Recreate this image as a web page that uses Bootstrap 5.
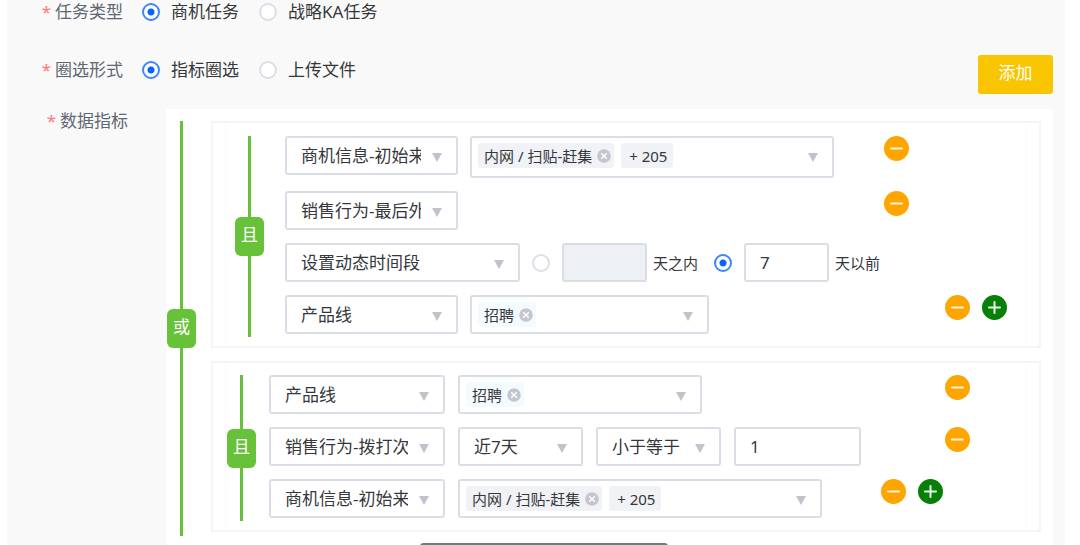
<!DOCTYPE html>
<html lang="zh-CN">
<head>
<meta charset="utf-8">
<meta name="viewport" content="width=device-width, initial-scale=1">
<title>任务圈选</title>
<link href="https://cdn.jsdelivr.net/npm/bootstrap@5.3.0/dist/css/bootstrap.min.css" rel="stylesheet">
<style>
  body { font: 17px/24px "Noto Sans", "Noto Sans CJK SC", sans-serif; color: #35373b; background: #fff; }
  .task-form { margin: 0 15px 0 7px; background: #f9f9f9; min-height: 100vh; }
  .form-line { padding-right: 12px; }
  .mode-line { margin-top: 31px; }
  .mode-line > span, .mode-line > label { padding-top: 3px; }
  .panel-line { margin-top: 15px; }
  .line-label { color: #606772; text-align: right; width: 116px; margin-right: 19px; }
  .line-label::before { content: "*"; color: #f77; margin-right: 4px; }
  .line-label.wide { width: 121px; margin-right: 38px; }
  .choice { gap: 11px; margin-right: 20px; }
  .dot { appearance: none; flex: none; width: 18px; height: 18px; margin: 0; border: 2px solid #dcdfe6; border-radius: 50%; background: #fff; }
  .dot:checked { border-color: #3d86ff; background: radial-gradient(circle, #0a62ff 3px, #fff 4px); }
  .btn-add { width: 75px; height: 39px; padding: 0 0 4px; font-size: 17px; line-height: 24px; color: #fff; background: #f8c500; border: 0; border-radius: 3px; }
  .btn-add:hover { background: #e6b600; color: #fff; }

  .rule-panel { background: #fff; padding: 12px 12px 9px 1px; gap: 15px; }
  .rail { width: 29px; flex: none; background: linear-gradient(#67c23a, #67c23a) center / 3px 100% no-repeat; }
  .rail-badge { width: 29px; height: 39px; line-height: 36px; text-align: center; color: #fff; background: #67c23a; border-radius: 6px; }
  .groups { gap: 13px; }
  .group-box { border: 2px solid #f5f5f5; padding: 0 12px; }
  .group-inner { border: solid #fafafa; border-width: 0 1px; padding: 13px 0 9px 9px; gap: 21px; }
  .group-inner.tight { padding-top: 12px; padding-left: 1px; gap: 13px; }
  .rules { gap: 13px; padding-bottom: 3px; }
  .fields { gap: 12px; }
  .short { width: 599px; }
  .long { width: 660px; }
  .tight .fields { gap: 13px; }
  .tight .short { width: 612px; }
  .tight .long { width: 676px; }

  .field { height: 39px; flex: none; border: 2px solid #dadde5; border-radius: 3px; background-color: #fff; color: inherit; font-size: 17px; line-height: 24px; padding: 0 14px 0 14px; }
  .field:disabled { background-color: #eef1f4; }
  .drop { appearance: none; padding-right: 35px; overflow: hidden; text-overflow: clip;
    background-image: url("data:image/svg+xml,%3Csvg xmlns='http://www.w3.org/2000/svg' viewBox='0 0 10 9'%3E%3Cpath d='M0 0h10L5 9z' fill='%23bfc3cc'/%3E%3C/svg%3E");
    background-repeat: no-repeat; background-position: right 14px top 15px; background-size: 10px 9px; }
  .multi { padding: 5px 34px 0 6px; gap: 7px; }
  .multi.tall { height: 42px; }
  .w-name { width: 173px; }
  .tight .w-name { width: 176px; }
  .w-period { width: 235px; }
  .w-tags { width: 364px; }
  .w-line { width: 239px; }
  .tight .w-line { width: 244px; }
  .w-op { width: 125px; }
  .w-value { width: 127px; }
  .w-days { width: 85px; }
  .note { font-size: 15px; gap: 6px; }
  .chip { height: 25px; padding: 0 3px 0 6px; gap: 5px; font-size: 15px; background: #f0f2f5; border-radius: 3px; }
  .chip.blue { background: #f4fbff; }
  .chip.count { padding: 0 6px 0 8px; }
  .icon-btn { border: 0; padding: 0; background: none; display: flex; }
  .acts { gap: 12px; }
  .scroll-pill { position: fixed; bottom: -5px; left: 50%; width: 248px; height: 7px; margin-left: -120px; border-radius: 5px; background: #77787b; }
</style>
</head>
<body>
<svg class="d-none" xmlns="http://www.w3.org/2000/svg">
  <symbol id="minus" viewBox="0 0 25 25"><circle cx="12.5" cy="12.5" r="12.5" fill="#ffa500"/><path d="M7 12.5h11" stroke="#fff4dd" stroke-width="2.2" stroke-linecap="round"/></symbol>
  <symbol id="plus" viewBox="0 0 25 25"><circle cx="12.5" cy="12.5" r="12.5" fill="#078007"/><path d="M7 12.5h11M12.5 7v11" stroke="#e8f5e8" stroke-width="2" stroke-linecap="round"/></symbol>
  <symbol id="clear" viewBox="0 0 14 14"><circle cx="7" cy="7" r="6.8" fill="#c3c6ce"/><path d="M4.2 4.2l5.6 5.6M9.8 4.2L4.2 9.8" stroke="#fff" stroke-width="1.4"/></symbol>
</svg>

<form class="task-form d-flex flex-column">
  <div class="form-line d-flex" role="radiogroup" aria-labelledby="l-type">
    <span class="line-label" id="l-type">任务类型</span>
    <label class="choice d-flex align-items-center"><input class="dot" type="radio" name="type" checked>商机任务</label>
    <label class="choice d-flex align-items-center"><input class="dot" type="radio" name="type">战略KA任务</label>
  </div>

  <div class="form-line mode-line d-flex align-items-start" role="radiogroup" aria-labelledby="l-mode">
    <span class="line-label" id="l-mode">圈选形式</span>
    <label class="choice d-flex align-items-center"><input class="dot" type="radio" name="mode" checked>指标圈选</label>
    <label class="choice d-flex align-items-center"><input class="dot" type="radio" name="mode">上传文件</label>
    <button type="button" class="btn btn-add ms-auto">添加</button>
  </div>

  <div class="form-line panel-line d-flex flex-grow-1">
    <span class="line-label wide">数据指标</span>
    <div class="rule-panel d-flex flex-grow-1">
      <div class="rail d-flex align-items-center"><span class="rail-badge">或</span></div>
      <div class="groups d-flex flex-column flex-grow-1">

        <section class="group-box">
          <div class="group-inner d-flex">
            <div class="rail d-flex align-items-center"><span class="rail-badge">且</span></div>
            <div class="rules d-flex flex-column">
              <div class="d-flex align-items-start">
                <div class="fields short d-flex align-items-start">
                  <select class="field drop w-name" aria-label="指标"><option>商机信息-初始来源</option></select>
                  <div class="field drop multi tall w-tags d-flex align-items-start" role="group" aria-label="来源">
                    <span class="chip d-flex align-items-center">内网 / 扫贴-赶集<button type="button" class="icon-btn" aria-label="移除"><svg width="14" height="14"><use href="#clear"/></svg></button></span>
                    <span class="chip count d-flex align-items-center">+ 205</span>
                  </div>
                </div>
                <div class="acts d-flex"><button type="button" class="icon-btn" aria-label="删除"><svg width="25" height="25"><use href="#minus"/></svg></button></div>
              </div>
              <div class="d-flex align-items-start">
                <div class="fields short d-flex">
                  <select class="field drop w-name" aria-label="指标"><option>销售行为-最后外呼</option></select>
                </div>
                <div class="acts d-flex"><button type="button" class="icon-btn" aria-label="删除"><svg width="25" height="25"><use href="#minus"/></svg></button></div>
              </div>
              <div class="fields d-flex align-items-center">
                <select class="field drop w-period" aria-label="时间段"><option>设置动态时间段</option></select>
                <input class="dot" type="radio" name="range" aria-label="天之内">
                <label class="d-flex align-items-center note"><input class="field w-days" type="text" disabled>天之内</label>
                <input class="dot ms-1" type="radio" name="range" aria-label="天以前" checked>
                <label class="d-flex align-items-center note"><input class="field w-days" type="text" value="7">天以前</label>
              </div>
              <div class="d-flex align-items-start">
                <div class="fields long d-flex">
                  <select class="field drop w-name" aria-label="指标"><option>产品线</option></select>
                  <div class="field drop multi w-line d-flex align-items-start" role="group" aria-label="产品线">
                    <span class="chip blue d-flex align-items-center">招聘<button type="button" class="icon-btn" aria-label="移除"><svg width="14" height="14"><use href="#clear"/></svg></button></span>
                  </div>
                </div>
                <div class="acts d-flex">
                  <button type="button" class="icon-btn" aria-label="删除"><svg width="25" height="25"><use href="#minus"/></svg></button>
                  <button type="button" class="icon-btn" aria-label="新增"><svg width="25" height="25"><use href="#plus"/></svg></button>
                </div>
              </div>
            </div>
          </div>
        </section>

        <section class="group-box">
          <div class="group-inner tight d-flex">
            <div class="rail d-flex align-items-center"><span class="rail-badge">且</span></div>
            <div class="rules d-flex flex-column">
              <div class="d-flex align-items-start">
                <div class="fields long d-flex">
                  <select class="field drop w-name" aria-label="指标"><option>产品线</option></select>
                  <div class="field drop multi w-line d-flex align-items-start" role="group" aria-label="产品线">
                    <span class="chip blue d-flex align-items-center">招聘<button type="button" class="icon-btn" aria-label="移除"><svg width="14" height="14"><use href="#clear"/></svg></button></span>
                  </div>
                </div>
                <div class="acts d-flex"><button type="button" class="icon-btn" aria-label="删除"><svg width="25" height="25"><use href="#minus"/></svg></button></div>
              </div>
              <div class="d-flex align-items-start">
                <div class="fields long d-flex">
                  <select class="field drop w-name" aria-label="指标"><option>销售行为-拨打次数</option></select>
                  <select class="field drop w-op" aria-label="周期"><option>近7天</option></select>
                  <select class="field drop w-op" aria-label="比较"><option>小于等于</option></select>
                  <input class="field w-value" type="text" value="1" aria-label="数值">
                </div>
                <div class="acts d-flex"><button type="button" class="icon-btn" aria-label="删除"><svg width="25" height="25"><use href="#minus"/></svg></button></div>
              </div>
              <div class="d-flex align-items-start">
                <div class="fields short d-flex">
                  <select class="field drop w-name" aria-label="指标"><option>商机信息-初始来源</option></select>
                  <div class="field drop multi w-tags d-flex align-items-start" role="group" aria-label="来源">
                    <span class="chip d-flex align-items-center">内网 / 扫贴-赶集<button type="button" class="icon-btn" aria-label="移除"><svg width="14" height="14"><use href="#clear"/></svg></button></span>
                    <span class="chip count d-flex align-items-center">+ 205</span>
                  </div>
                </div>
                <div class="acts d-flex">
                  <button type="button" class="icon-btn" aria-label="删除"><svg width="25" height="25"><use href="#minus"/></svg></button>
                  <button type="button" class="icon-btn" aria-label="新增"><svg width="25" height="25"><use href="#plus"/></svg></button>
                </div>
              </div>
            </div>
          </div>
        </section>
      </div>
    </div>
  </div>
</form>
<div class="scroll-pill"></div>
<script src="https://cdn.jsdelivr.net/npm/bootstrap@5.3.0/dist/js/bootstrap.bundle.min.js"></script>
</body>
</html>
